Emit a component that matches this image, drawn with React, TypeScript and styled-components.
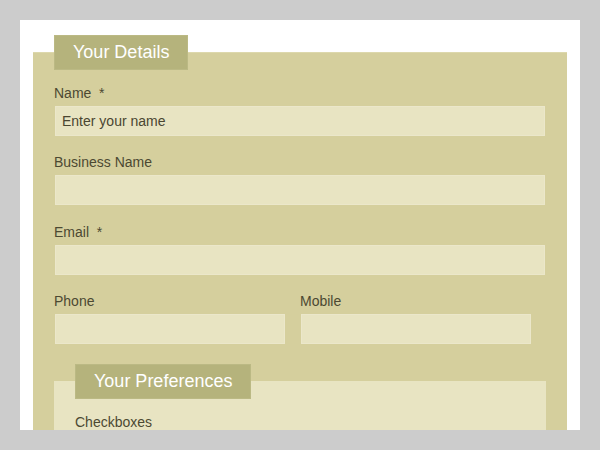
import React from "react";
import styled, { createGlobalStyle } from "styled-components";

const GlobalStyle = createGlobalStyle`
  html, body {
    margin: 0;
    padding: 0;
    background: #cccccc;
    font-family: "Liberation Sans", Arial, sans-serif;
  }
  body {
    height: 450px;
    overflow: hidden;
  }
`;

const Page = styled.div`
  margin: 20px;
  height: 410px;
  background: #ffffff;
  overflow: hidden;
  padding: 32px 13px 0;
  box-sizing: border-box;
`;

const Fieldset = styled.section<{ $nested?: boolean }>`
  display: flex;
  flex-direction: column;
  background: ${(p) => (p.$nested ? "#e8e4c2" : "#d5cf9d")};
  border-top: ${(p) => (p.$nested ? "none" : "1px solid #ddd8ac")};
  padding: 0 21px 20px;
  margin-top: ${(p) => (p.$nested ? "18.5px" : "0")};
`;

const Legend = styled.div<{ $nested?: boolean }>`
  align-self: flex-start;
  margin: ${(p) => (p.$nested ? "-17px" : "-18px")} 0 15px;
  height: 35px;
  padding: 0 18px;
  box-sizing: border-box;
  background: #b5b37c;
  border: 1px solid #bbb984;
  color: #ffffff;
  font-size: 18px;
  line-height: 33px;
  white-space: nowrap;
`;

const Field = styled.div`
  display: flex;
  flex-direction: column;
  margin-bottom: 18.25px;
`;

const Row = styled.div`
  display: grid;
  grid-template-columns: 246px 246px;
`;

const Label = styled.label`
  display: block;
  font-size: 14px;
  line-height: 16px;
  color: #4c4932;
  margin-bottom: 5px;
`;

const Input = styled.input<{ $half?: boolean }>`
  width: ${(p) => (p.$half ? "230px" : "490px")};
  height: 30px;
  margin: 0 0 0 1px;
  box-sizing: border-box;
  background: #e8e4c2;
  border: 1px solid #ebe7ca;
  padding: 0 6px;
  font-family: "Liberation Sans", Arial, sans-serif;
  font-size: 14px;
  color: #4a4631;
  outline: none;
  &::placeholder {
    color: #4a4631;
    opacity: 1;
  }
`;

const SubHeading = styled.div`
  font-size: 14px;
  line-height: 16px;
  color: #4c4932;
  margin-bottom: 8px;
`;

export default function App() {
  return (
    <>
      <GlobalStyle />
      <Page>
        <Fieldset>
          <Legend>Your Details</Legend>
          <Field>
            <Label>Name &nbsp;*</Label>
            <Input placeholder="Enter your name" />
          </Field>
          <Field>
            <Label>Business Name</Label>
            <Input />
          </Field>
          <Field>
            <Label>Email &nbsp;*</Label>
            <Input />
          </Field>
          <Row>
            <Field>
              <Label>Phone</Label>
              <Input $half />
            </Field>
            <Field>
              <Label>Mobile</Label>
              <Input $half />
            </Field>
          </Row>
          <Fieldset $nested>
            <Legend $nested>Your Preferences</Legend>
            <SubHeading>Checkboxes</SubHeading>
          </Fieldset>
        </Fieldset>
      </Page>
    </>
  );
}
